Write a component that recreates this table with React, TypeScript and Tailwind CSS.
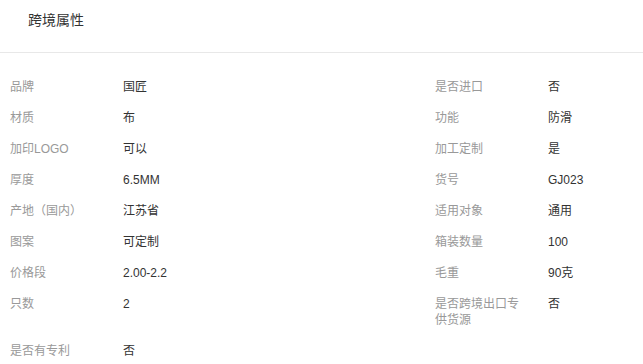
const rows: [string, string, string, string][] = [
  ['品牌', '国匠', '是否进口', '否'],
  ['材质', '布', '功能', '防滑'],
  ['加印LOGO', '可以', '加工定制', '是'],
  ['厚度', '6.5MM', '货号', 'GJ023'],
  ['产地（国内）', '江苏省', '适用对象', '通用'],
  ['图案', '可定制', '箱装数量', '100'],
  ['价格段', '2.00-2.2', '毛重', '90克'],
  ['只数', '2', '是否跨境出口专供货源', '否'],
];

function Attr({ label, value, wide }: { label: string; value: string; wide?: boolean }) {
  return (
    <div className={`flex ${wide ? 'w-[425px] shrink-0' : 'flex-1'}`}>
      <div className="w-[123px] shrink-0 pl-[10px] pr-[25px] text-[#999]">{label}</div>
      <div className="flex-1 text-[#333]">{value}</div>
    </div>
  );
}

export default function App() {
  return (
    <div
      className="h-[364px] w-[643px] overflow-hidden bg-white"
      style={{ fontFamily: '"Liberation Sans", "Noto Sans CJK SC", sans-serif' }}
    >
      {/* Header */}
      <div className="h-[53px] border-b border-[#e8e8e8] pl-[28px] pt-[10px] text-[14px] leading-[20px] text-[#333]">
        跨境属性
      </div>

      {/* Attributes */}
      <div className="pt-[18px] text-[12px] leading-[16px]">
        {rows.map((r, i) => (
          <div key={i} className="flex py-[7.5px]">
            <Attr label={r[0]} value={r[1]} wide />
            <Attr label={r[2]} value={r[3]} />
          </div>
        ))}
        <div className="flex py-[7.5px]">
          <Attr label="是否有专利" value="否" wide />
        </div>
      </div>
    </div>
  );
}
